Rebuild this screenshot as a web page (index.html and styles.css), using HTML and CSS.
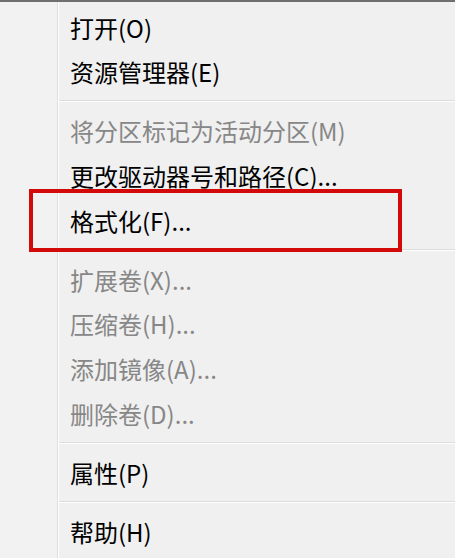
FILE: index.html
```html
<!DOCTYPE html>
<html lang="zh-CN">
<head>
<meta charset="utf-8">
<link rel="stylesheet" href="styles.css">
</head>
<body>
<div class="menu">
  <div class="item">打开(O)</div>
  <div class="item">资源管理器(E)</div>
  <div class="sep"></div>
  <div class="item disabled">将分区标记为活动分区(M)</div>
  <div class="item">更改驱动器号和路径(C)...</div>
  <div class="item highlight">格式化(F)...<span class="mark"></span></div>
  <div class="sep"></div>
  <div class="item disabled">扩展卷(X)...</div>
  <div class="item disabled">压缩卷(H)...</div>
  <div class="item disabled">添加镜像(A)...</div>
  <div class="item disabled">删除卷(D)...</div>
  <div class="sep"></div>
  <div class="item">属性(P)</div>
  <div class="sep"></div>
  <div class="item">帮助(H)</div>
</div>
</body>
</html>
```
FILE: styles.css
```css
html, body {
  margin: 0;
  padding: 0;
  background: #ffffff;
}
body {
  width: 458px;
  height: 560px;
  overflow: hidden;
  font-family: "Noto Sans CJK SC", "Noto Sans", sans-serif;
}
.menu {
  width: 455px;
  height: 553px;
  border-top: 2px solid #6f6f6f;
  background-color: #f0f0f0;
  background-image: linear-gradient(to right,
    #f2f2f2 0, #f2f2f2 57px,
    #dedede 57px, #dedede 58px,
    #ffffff 58px, #ffffff 59px,
    transparent 59px);
  padding-top: 3px;
  box-sizing: content-box;
  display: flex;
  flex-direction: column;
}
.item {
  position: relative;
  height: 44.6px;
  display: flex;
  align-items: center;
  padding-left: 70px;
  font-size: 24px;
  font-weight: 400;
  color: #000000;
  white-space: nowrap;
}
.item.disabled {
  color: #878787;
}
.sep {
  height: 14.5px;
  display: flex;
  flex-direction: column;
  justify-content: center;
  padding-left: 59px;
}
.sep::before {
  content: "";
  display: block;
  height: 1px;
  background: #dcdcdc;
  border-bottom: 1px solid #ffffff;
}
.mark {
  position: absolute;
  left: 29px;
  top: -9px;
  width: 365px;
  height: 55px;
  border: 4px solid #d20a0a;
}
```
